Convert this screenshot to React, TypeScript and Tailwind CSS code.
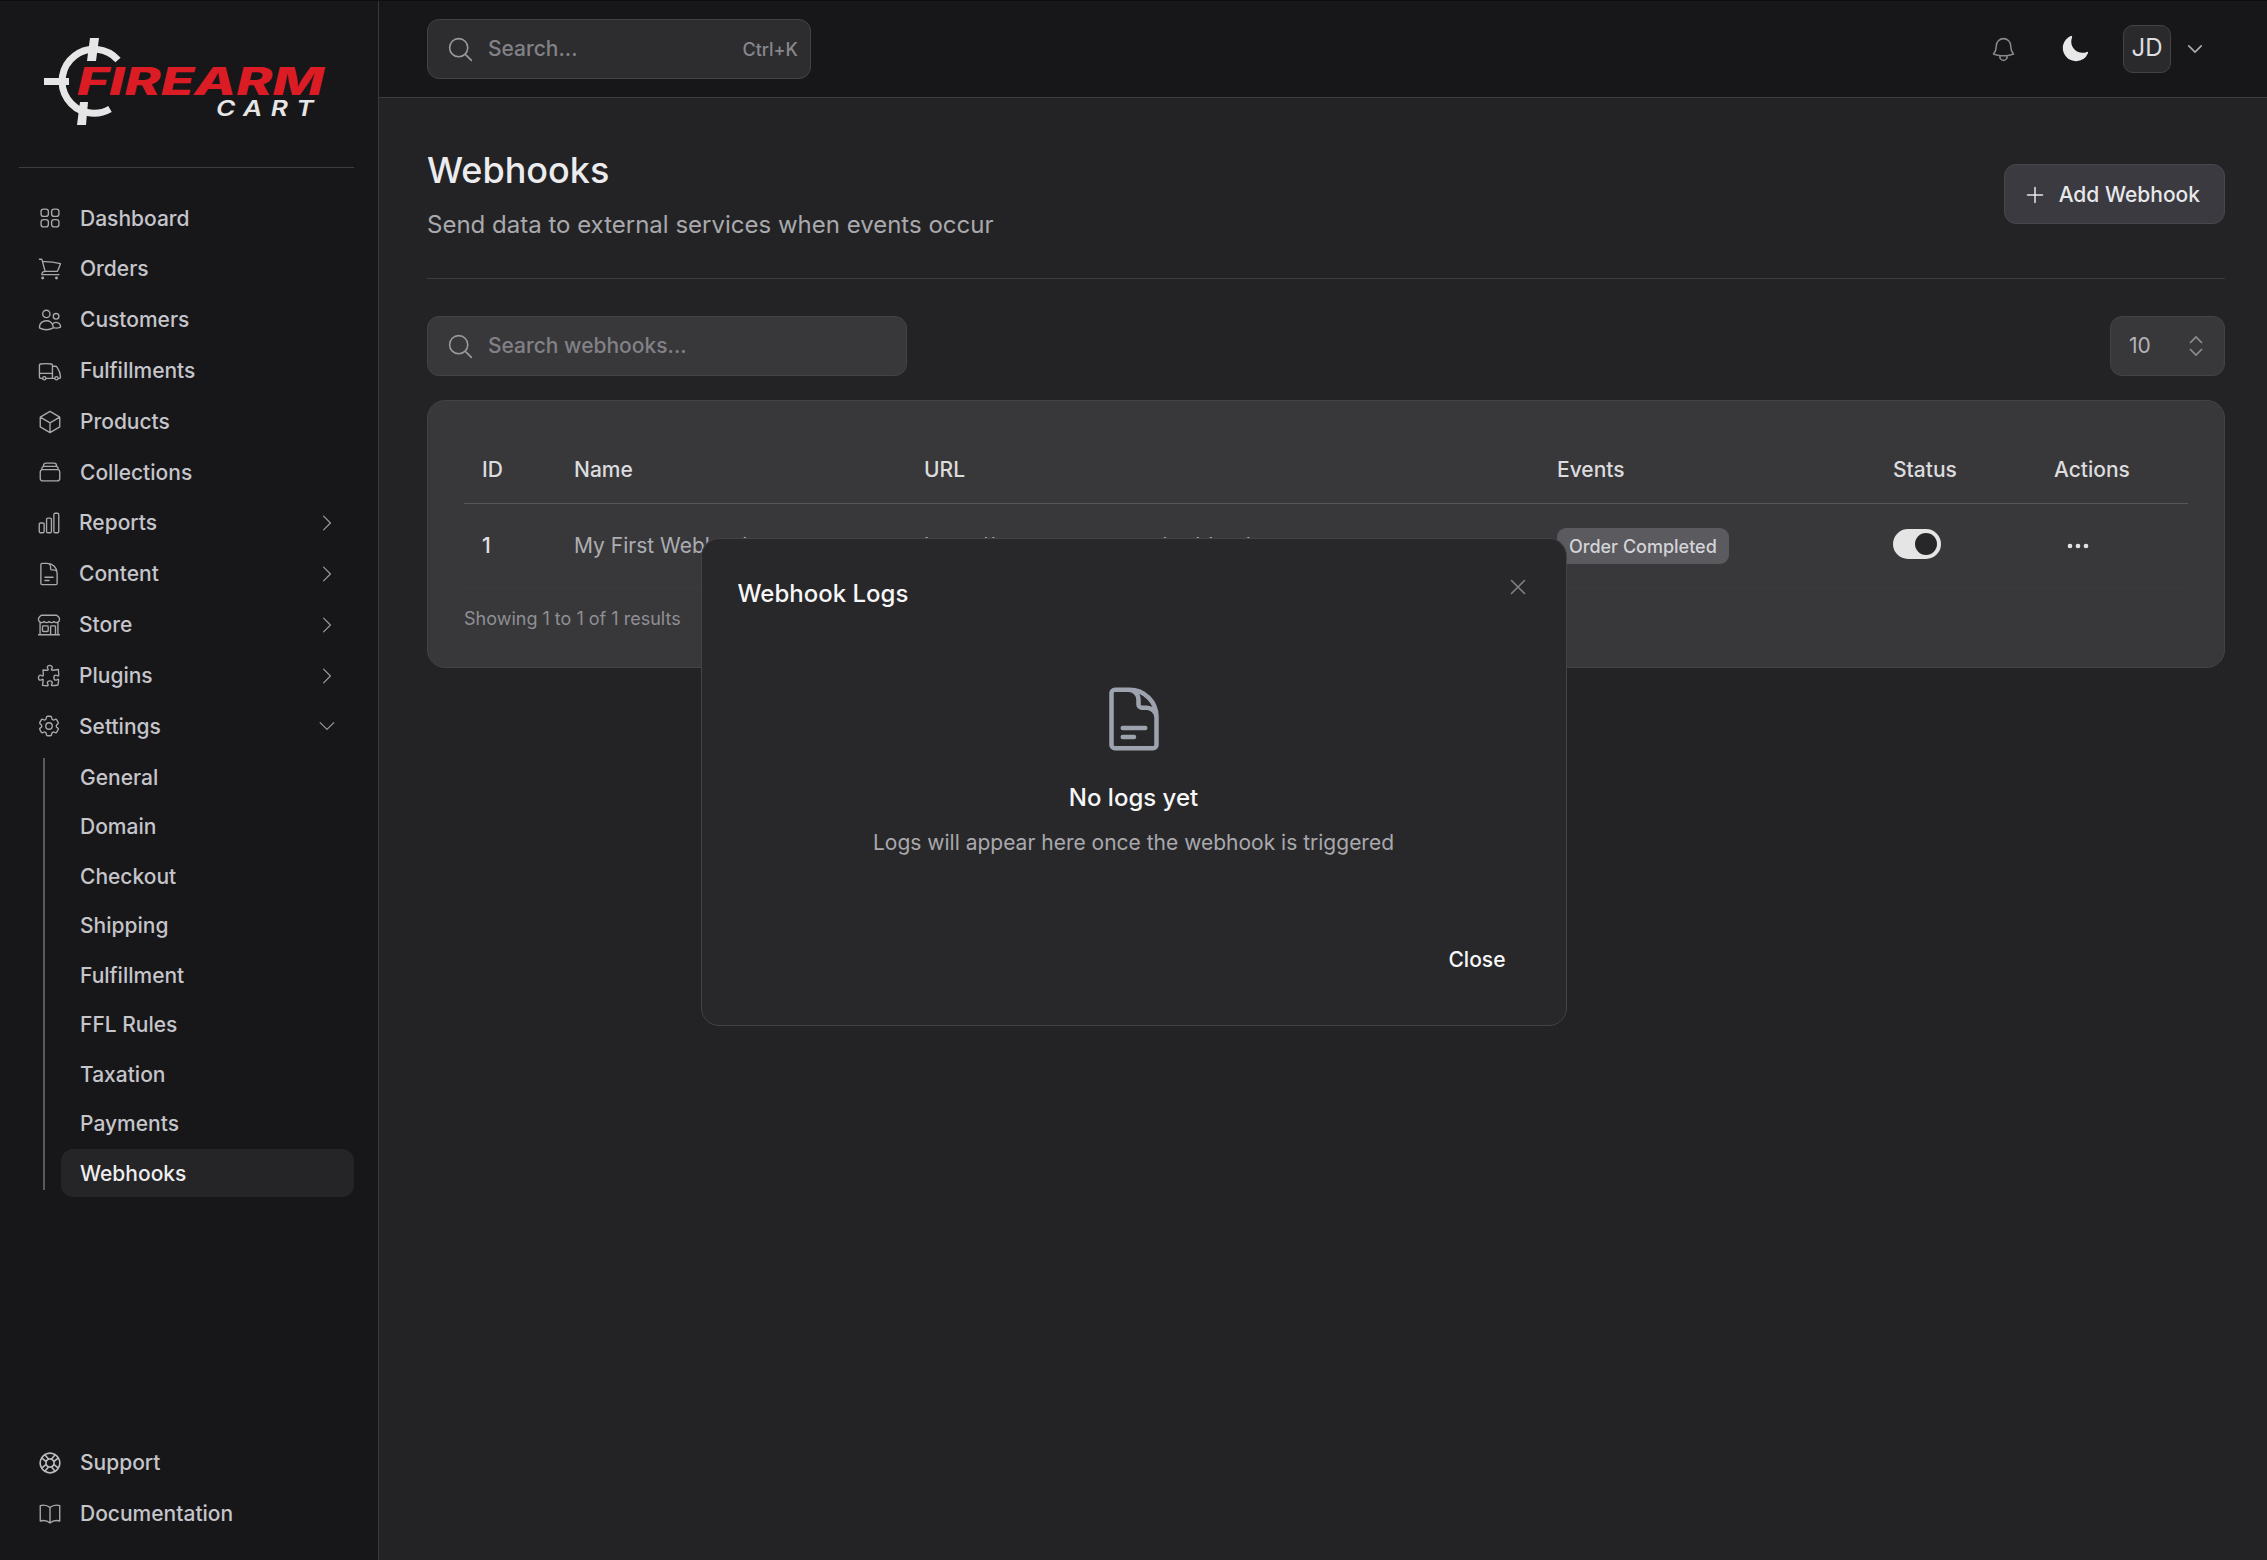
import React from "react";
import {
  HiMoon,
  HiOutlineBell,
  HiOutlineBookOpen,
  HiOutlineBuildingStorefront,
  HiOutlineChartBar,
  HiOutlineChevronDown,
  HiOutlineChevronRight,
  HiOutlineCog6Tooth,
  HiOutlineCube,
  HiOutlineDocumentText,
  HiOutlineEllipsisHorizontal,
  HiOutlineLifebuoy,
  HiOutlineMagnifyingGlass,
  HiOutlinePlus,
  HiOutlinePuzzlePiece,
  HiOutlineRectangleStack,
  HiOutlineShoppingCart,
  HiOutlineSquares2X2,
  HiOutlineTruck,
  HiOutlineUsers,
  HiOutlineXMark,
} from "react-icons/hi2";

const mainNav = [
  { label: "Dashboard", icon: HiOutlineSquares2X2 },
  { label: "Orders", icon: HiOutlineShoppingCart },
  { label: "Customers", icon: HiOutlineUsers },
  { label: "Fulfillments", icon: HiOutlineTruck },
  { label: "Products", icon: HiOutlineCube },
  { label: "Collections", icon: HiOutlineRectangleStack },
];

const groupNav = [
  { label: "Reports", icon: HiOutlineChartBar },
  { label: "Content", icon: HiOutlineDocumentText },
  { label: "Store", icon: HiOutlineBuildingStorefront },
  { label: "Plugins", icon: HiOutlinePuzzlePiece },
];

const settingsNav = ["General", "Domain", "Checkout", "Shipping", "Fulfillment", "FFL Rules", "Taxation", "Payments"];

function Logo() {
  return (
    <svg width="290" height="96" viewBox="0 0 290 96" fill="none">
      <g transform="translate(-39 -34)">
        <path d="M118 60A32 32 0 1 0 110 109" stroke="#e6e6e6" strokeWidth="7" />
        <path d="M90 38h9l-3 23h-9zM44 78h25v7H44zM80 102h8l-2 23h-9z" fill="#e6e6e6" />
        <text
          x="77"
          y="95"
          fontFamily="Inter, sans-serif"
          fontWeight="800"
          fontSize="38"
          fontStyle="italic"
          fill="#dc1c24"
          textLength="247"
          lengthAdjust="spacingAndGlyphs"
        >
          FIREARM
        </text>
        <text
          x="216"
          y="116"
          fontFamily="Inter, sans-serif"
          fontWeight="600"
          fontSize="22"
          fontStyle="italic"
          fill="#e6e6e6"
          letterSpacing="7"
          textLength="106"
          lengthAdjust="spacingAndGlyphs"
        >
          CART
        </text>
      </g>
    </svg>
  );
}

function SearchBox({ text, width, bg, hint }: { text: string; width: string; bg: string; hint?: string }) {
  return (
    <div className={`flex h-[60px] items-center rounded-[12px] border border-[#434346] pl-[18px] pr-[12px] ${width} ${bg}`}>
      <HiOutlineMagnifyingGlass size={29} strokeWidth={1.3} className="shrink-0 text-[#9a9a9f]" />
      <span className="ml-[13px] flex-1 text-[21px] text-[#818186]">{text}</span>
      {hint && <span className="text-[18px] text-[#87878c]">{hint}</span>}
    </div>
  );
}

export default function App() {
  return (
    <div className="flex h-screen w-screen overflow-hidden border-t border-[#0e0e10] bg-[#232325] font-[Inter,sans-serif] text-[21px] font-medium">
      <aside className="flex w-[379px] shrink-0 flex-col border-r border-[#38383b] bg-[#17171a] pb-[21px]">
        <div className="ml-[19px] mr-[24px] flex h-[167px] shrink-0 items-start border-b border-[#3d3d40] pl-[20px] pt-[33px]">
          <Logo />
        </div>

        <nav className="mt-[25px] flex flex-col pl-[19px] pr-[24px] text-[#c5c5ca]">
          {mainNav.map((item) => (
            <a key={item.label} className="flex h-[50.8px] items-center pl-[18px]">
              <item.icon size={26} strokeWidth={1.25} className="shrink-0 text-[#a8a8ad]" />
              <span className="ml-[17px]">{item.label}</span>
            </a>
          ))}
          {groupNav.map((item) => (
            <a key={item.label} className="flex h-[50.8px] items-center pl-[17px] pr-[16px]">
              <item.icon size={26} strokeWidth={1.25} className="shrink-0 text-[#a8a8ad]" />
              <span className="ml-[17px] flex-1">{item.label}</span>
              <HiOutlineChevronRight size={22} strokeWidth={1.25} className="text-[#9c9ca1]" />
            </a>
          ))}
          <a className="flex h-[50.8px] items-center pl-[17px] pr-[16px]">
            <HiOutlineCog6Tooth size={26} strokeWidth={1.25} className="shrink-0 text-[#a8a8ad]" />
            <span className="ml-[17px] flex-1">Settings</span>
            <HiOutlineChevronDown size={22} strokeWidth={1.25} className="text-[#9c9ca1]" />
          </a>

          <div className="relative ml-[24px] mt-[1.5px] flex flex-col gap-[1.5px] pl-[18px]">
            <span className="absolute bottom-[7px] left-0 top-[5px] w-[2px] bg-[#59595c]" />
            {settingsNav.map((label) => (
              <a key={label} className="flex h-[48px] items-center pl-[19px]">
                {label}
              </a>
            ))}
            <a className="flex h-[48px] items-center rounded-[12px] bg-[#252527] pl-[19px] text-[#eeeef0]">Webhooks</a>
          </div>
        </nav>

        <div className="mt-auto flex flex-col pl-[19px] pr-[24px] text-[#c5c5ca]">
          <a className="flex h-[50.8px] items-center pl-[18px]">
            <HiOutlineLifebuoy size={26} strokeWidth={1.5} className="shrink-0 text-[#bcbcc0]" />
            <span className="ml-[17px]">Support</span>
          </a>
          <a className="flex h-[50.8px] items-center pl-[18px]">
            <HiOutlineBookOpen size={26} strokeWidth={1.25} className="shrink-0 text-[#a8a8ad]" />
            <span className="ml-[17px]">Documentation</span>
          </a>
        </div>
      </aside>

      <div className="flex min-w-0 flex-1 flex-col">
        <header className="flex h-[97px] shrink-0 items-center justify-between border-b border-[#3d3d40] bg-[#17171a] pl-[48px] pr-[62px]">
          <SearchBox text="Search..." width="w-[384px]" bg="bg-[#2d2d30]" hint="Ctrl+K" />
          <div className="flex items-center">
            <span className="flex w-[40px] justify-center">
              <HiOutlineBell size={29} strokeWidth={1.25} className="text-[#88888d]" />
            </span>
            <span className="ml-[32px] flex w-[40px] justify-center">
              <HiMoon size={30} className="text-[#e8e8e8]" />
            </span>
            <span className="ml-[28px] flex h-[48px] w-[48px] items-center justify-center rounded-[10px] border border-[#434346] bg-[#2a2a2d] pb-[2px] text-[24px] font-normal text-[#dedee0]">
              JD
            </span>
            <HiOutlineChevronDown size={20} strokeWidth={2} className="ml-[14px] text-[#aaaaae]" />
          </div>
        </header>

        <main className="flex flex-1 flex-col pl-[48px] pr-[42px] pt-[49px]">
          <div className="flex items-center justify-between border-b border-[#3a3a3d] pb-[37px]">
            <div>
              <h1 className="text-[36px] font-medium leading-[46px] text-[#ececee]">Webhooks</h1>
              <p className="mt-[16px] text-[24px] font-normal leading-[32px] text-[#a9a9ad]">
                Send data to external services when events occur
              </p>
            </div>
            <button className="flex h-[60px] items-center rounded-[12px] border border-[#48484c] bg-[#3a3a40] pl-[18px] pr-[24px] pt-[1px] text-[#e8e8ea]">
              <HiOutlinePlus size={24} strokeWidth={1.5} />
              <span className="ml-[12px]">Add Webhook</span>
            </button>
          </div>

          <div className="mt-[37px] flex items-center justify-between">
            <SearchBox text="Search webhooks..." width="w-[480px]" bg="bg-[#38383b]" />
            <div className="flex h-[60px] w-[115px] items-center justify-between rounded-[12px] border border-[#434346] bg-[#38383b] pl-[18px] pr-[21px] font-normal text-[#b4b4b9]">
              10
              <svg width="14" height="22" viewBox="0 0 14 22" fill="none" stroke="#8e8e93" strokeWidth="1.6">
                <path d="M1 8l6-6 6 6M1 14l6 6 6-6" />
              </svg>
            </div>
          </div>

          <section className="mt-[24px] rounded-[18px] border border-[#434346] bg-[#38383a] px-[36px] pb-[36px] pt-[36px]">
            <table className="w-full table-fixed border-collapse text-left">
              <colgroup>
                <col className="w-[92px]" />
                <col className="w-[350px]" />
                <col className="w-[633px]" />
                <col className="w-[336px]" />
                <col className="w-[161px]" />
                <col className="w-[152px]" />
              </colgroup>
              <thead>
                <tr className="h-[66px] border-b border-[#55555a] text-[#dcdcdf]">
                  <th className="px-[18px] font-medium">ID</th>
                  <th className="px-[18px] font-medium">Name</th>
                  <th className="px-[18px] font-medium">URL</th>
                  <th className="px-[18px] font-medium">Events</th>
                  <th className="px-[18px] font-medium">Status</th>
                  <th className="px-[18px] font-medium">Actions</th>
                </tr>
              </thead>
              <tbody>
                <tr className="h-[84px] border-b border-[#3c3c3f] font-normal text-[#adadb2]">
                  <td className="px-[18px] pt-[2px] font-medium text-[#e2e2e4]">1</td>
                  <td className="px-[18px] pt-[2px]">My First Webhook</td>
                  <td className="truncate px-[18px] pt-[2px]">https://your-server.com/webhook</td>
                  <td className="px-[18px] pt-[2px]">
                    <span className="inline-flex h-[36px] items-center rounded-[9px] bg-[#5a5a5f] px-[12px] text-[18px] font-medium text-[#d4d4d8]">
                      Order Completed
                    </span>
                  </td>
                  <td className="px-[18px] pt-[2px]">
                    <span className="mb-[4px] flex h-[30px] w-[48px] items-center justify-end rounded-full bg-[#e5e5e5] pr-[4px]">
                      <span className="h-[22px] w-[22px] rounded-full bg-[#27272a]" />
                    </span>
                  </td>
                  <td className="px-[18px] pt-[2px]">
                    <HiOutlineEllipsisHorizontal size={32} strokeWidth={2} className="ml-[8px] text-[#e6e6e8]" />
                  </td>
                </tr>
              </tbody>
            </table>
            <p className="mt-[19px] text-[18px] font-normal leading-[24px] text-[#8f8f94]">Showing 1 to 1 of 1 results</p>
          </section>
        </main>
      </div>

      <div className="fixed inset-0 flex items-center justify-center pt-[4px]">
        <div className="relative flex h-[488px] w-[866px] flex-col rounded-[18px] border border-[#434346] bg-[#28282a]">
          <h2 className="ml-[36px] mt-[40px] text-[24px] font-medium leading-[30px] text-[#f7f7f8]">Webhook Logs</h2>
          <button className="absolute right-[35px] top-[35px] text-[#808085]">
            <HiOutlineXMark size={26} strokeWidth={1.5} />
          </button>
          <div className="mt-[74px] flex flex-col items-center">
            <HiOutlineDocumentText size={72} strokeWidth={1.5} className="text-[#9ca3af]" />
            <p className="mt-[28px] text-[24px] font-medium leading-[30px] text-[#f7f7f8]">No logs yet</p>
            <p className="mt-[16px] text-[21px] font-normal leading-[28px] text-[#a8a8ad]">
              Logs will appear here once the webhook is triggered
            </p>
          </div>
          <button className="absolute bottom-[50px] right-[60px] text-[#f7f7f8]">Close</button>
        </div>
      </div>
    </div>
  );
}
